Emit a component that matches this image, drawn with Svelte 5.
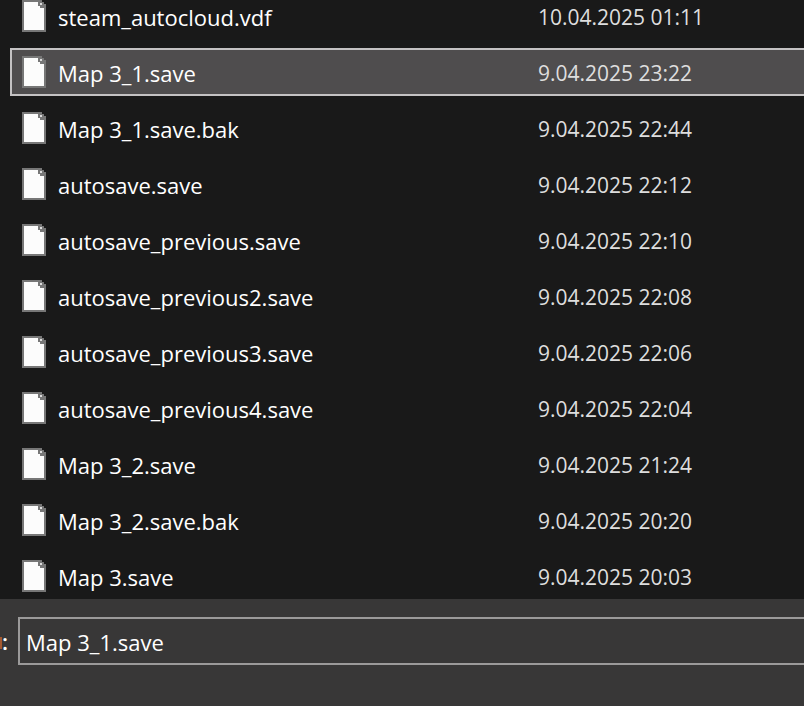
<script lang="ts">
  interface SaveFile {
    name: string;
    modified: string;
  }

  const files: SaveFile[] = [
    { name: 'steam_autocloud.vdf', modified: '10.04.2025 01:11' },
    { name: 'Map 3_1.save', modified: '9.04.2025 23:22' },
    { name: 'Map 3_1.save.bak', modified: '9.04.2025 22:44' },
    { name: 'autosave.save', modified: '9.04.2025 22:12' },
    { name: 'autosave_previous.save', modified: '9.04.2025 22:10' },
    { name: 'autosave_previous2.save', modified: '9.04.2025 22:08' },
    { name: 'autosave_previous3.save', modified: '9.04.2025 22:06' },
    { name: 'autosave_previous4.save', modified: '9.04.2025 22:04' },
    { name: 'Map 3_2.save', modified: '9.04.2025 21:24' },
    { name: 'Map 3_2.save.bak', modified: '9.04.2025 20:20' },
    { name: 'Map 3.save', modified: '9.04.2025 20:03' }
  ];

  let fileName = $state('Map 3_1.save');
</script>

<div class="dialog">
  <div class="list">
    <table>
      <tbody>
        {#each files as file}
          <tr class:selected={file.name === fileName} onclick={() => (fileName = file.name)}>
            <td class="name">
              <div class="file">
                <svg width="24" height="32" viewBox="0 0 24 32" shape-rendering="crispEdges" aria-hidden="true">
                  <path d="M0 0H20V2H22V4H24V32H0Z" fill="#777" />
                  <path d="M2 2H16V6H18V8H22V30H2Z" fill="#fcfcfc" />
                  <path d="M18 3H20V5H18Z" fill="#ddd" />
                </svg>
                <span>{file.name}</span>
              </div>
            </td>
            <td class="modified">{file.modified}</td>
          </tr>
        {/each}
      </tbody>
    </table>
  </div>

  <div class="footer">
    <label for="file-name">:</label>
    <input id="file-name" type="text" bind:value={fileName} spellcheck="false" />
  </div>
</div>

<style>
  :global(body) {
    margin: 0;
    background: #191919;
  }

  .dialog {
    display: flex;
    flex-direction: column;
    min-height: 100vh;
    overflow: hidden;
    font-family: 'Segoe UI', 'Open Sans', 'Noto Sans', sans-serif;
    font-size: 22px;
    font-weight: 500;
    line-height: 32px;
    color: #fff;
  }

  .list {
    padding-left: 10px;
    background: #191919;
  }

  /* scrolled so that the first row is cut at the top */
  table {
    width: 100%;
    margin: -16px 0 -9px;
    table-layout: fixed;
    border-collapse: separate;
    border-spacing: 0 8px;
  }

  td {
    box-sizing: border-box;
    height: 48px;
    padding: 0;
    border: 2px solid transparent;
    border-width: 2px 0;
    white-space: nowrap;
    cursor: default;
  }

  .name {
    width: 528px;
    padding-left: 10px;
    border-left-width: 2px;
  }

  .modified {
    padding-top: 2px;
    color: #dedede;
    font-size: 21px;
  }

  .selected td {
    background: #4f4d4e;
    border-color: #c4c2c3;
  }

  .file {
    display: flex;
    align-items: center;
    gap: 12px;
  }

  .file span {
    padding-top: 2px;
  }

  .footer {
    display: flex;
    flex: 1;
    align-items: flex-start;
    gap: 10px;
    padding-top: 18px;
    background: #383737;
  }

  /* only the end of the label column is in view; the edge of its last letter shows */
  label {
    box-sizing: border-box;
    width: 8px;
    padding-left: 2px;
    line-height: 48px;
    font-weight: 600;
    background: linear-gradient(#a4592f, #a4592f) 0 20px / 2px 12px no-repeat;
  }

  input {
    box-sizing: border-box;
    flex: 1;
    min-width: 0;
    height: 48px;
    padding: 2px 6px 0;
    border: 2px solid #9b9a9a;
    border-right: 0;
    border-radius: 0;
    outline: none;
    background: #383737;
    color: #fff;
    font: inherit;
  }
</style>
